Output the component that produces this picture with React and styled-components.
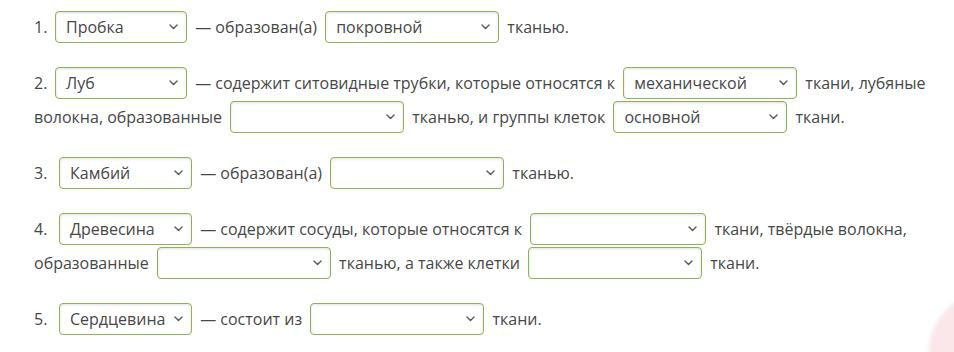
import styled, { createGlobalStyle } from "styled-components";

const GlobalStyle = createGlobalStyle`
  body {
    margin: 0;
    background: #fff;
    font-family: "Open Sans", "Noto Sans", sans-serif;
  }
`;

const Chevron = () => (
  <svg width="9" height="6" viewBox="0 0 9 6">
    <path d="M1 1l3.5 3.5L8 1" fill="none" stroke="#555" strokeWidth="1.4" strokeLinecap="round" strokeLinejoin="round" />
  </svg>
);

const Dropdown = ({ value, $w = 174 }) => (
  <Select $w={$w}>
    <SelectValue>{value}</SelectValue>
    <Chevron />
  </Select>
);

const App = () => (
  <>
    <GlobalStyle />
    <Page>
      <Para>
        <Num $w={17}>1.</Num>
        <Dropdown value="Пробка" $w={132} /> — образован(а) <Dropdown value="покровной" /> тканью.
      </Para>
      <Para>
        <Num $w={17}>2.</Num>
        <Dropdown value="Луб" $w={132} /> — содержит ситовидные трубки, которые относятся к{" "}
        <Dropdown value="механической" /> ткани, лубяные волокна, образованные <Dropdown value="" /> тканью, и группы
        клеток <Dropdown value="основной" /> ткани.
      </Para>
      <Para>
        <Num $w={21}>3.</Num>
        <Dropdown value="Камбий" $w={133} /> — образован(а) <Dropdown value="" /> тканью.
      </Para>
      <Para>
        <Num $w={21}>4.</Num>
        <Dropdown value="Древесина" $w={133} /> — содержит сосуды, которые относятся к{" "}
        <Dropdown value="" $w={176} /> ткани, твёрдые волокна, образованные <Dropdown value="" /> тканью, а также
        клетки <Dropdown value="" /> ткани.
      </Para>
      <Para>
        <Num $w={21}>5.</Num>
        <Dropdown value="Сердцевина" $w={133} /> — состоит из <Dropdown value="" /> ткани.
      </Para>
      <Blob />
    </Page>
  </>
);

export default App;

const Page = styled.div`
  position: relative;
  width: 954px;
  height: 352px;
  overflow: hidden;
  padding: 10px 20px 0 34px;
  box-sizing: border-box;
`;

const Para = styled.p`
  margin: 0 0 22px;
  width: 900px;
  font-size: 16px;
  line-height: 34px;
  color: #474747;
`;

const Num = styled.span`
  display: inline-block;
  width: ${({ $w }) => $w}px;
`;

const Select = styled.span`
  display: inline-flex;
  align-items: center;
  justify-content: space-between;
  box-sizing: border-box;
  width: ${({ $w }) => $w}px;
  height: 32px;
  margin: 1px 4px;
  padding: 0 8px 0 10px;
  vertical-align: top;
  border: 1px solid #8fb055;
  border-radius: 4px;
  background: #fff;
  box-shadow: inset 0 1px 3px rgba(0, 0, 0, 0.12);
  line-height: 1;
`;

const SelectValue = styled.span`
  color: #474747;
  font-size: 16px;
  white-space: nowrap;
`;

const Blob = styled.div`
  position: absolute;
  right: -95px;
  bottom: -60px;
  width: 120px;
  height: 120px;
  border-radius: 50%;
  background: #fbe6e9;
  filter: blur(2px);
`;
